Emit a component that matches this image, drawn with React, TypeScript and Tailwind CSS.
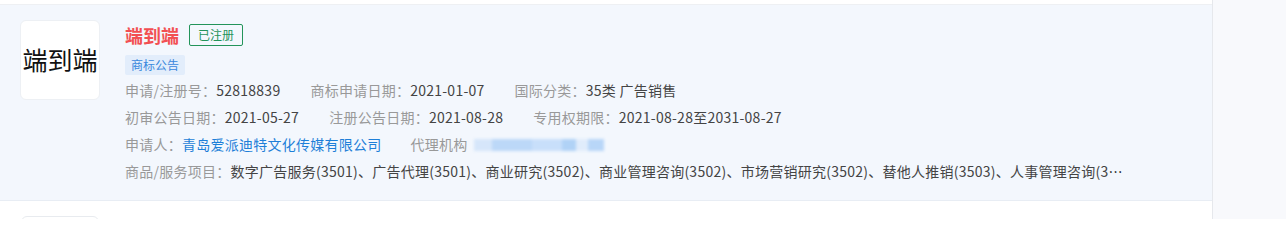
import React from "react";

const font = { fontFamily: '"Noto Sans CJK SC", "Noto Sans", sans-serif' };

function Field({ label, value, blue }: { label: string; value: React.ReactNode; blue?: boolean }) {
  return (
    <span className="whitespace-nowrap">
      <span className="text-[#999999]">{label}：</span>
      <span className={blue ? "text-[#1e7fd8]" : "text-[#444444]"}>{value}</span>
    </span>
  );
}

const goods =
  "数字广告服务(3501)、广告代理(3501)、商业研究(3502)、商业管理咨询(3502)、市场营销研究(3502)、替他人推销(3503)、人事管理咨询(3504)、商业信息代理(3505)、会计(3506)";

export default function App() {
  return (
    <div className="flex h-[219px] w-full overflow-hidden bg-[#f8f9fc]" style={font}>
      <div className="w-[1213px] shrink-0 border-r border-[#e6e8ec] bg-white">
        <div className="h-[5px] border-b border-[#eef0f3]" />
        {/* 商标卡片 */}
        <div className="flex h-[196px] items-start gap-[25px] border-b border-[#e8edf4] bg-[#f3f7fd] pl-[20px] pt-[15px]">
          <div className="flex h-[80px] w-[80px] shrink-0 items-center justify-center rounded-[6px] border border-[#edf0f4] bg-white text-[25px] text-[#111111]">
            端到端
          </div>
          <div className="mt-[4px] flex min-w-0 flex-col">
            <div className="flex h-[22px] items-center gap-[10px]">
              <span className="text-[18px] font-bold leading-[22px] text-[#f24f52]">端到端</span>
              <span className="flex h-[22px] items-center rounded-[2px] border border-[#23945a] px-[8px] text-[12px] text-[#23945a]">
                已注册
              </span>
            </div>
            <div className="mt-[9px] flex">
              <span className="flex h-[20px] items-center rounded-[2px] bg-[#e2edfb] px-[6px] text-[12px] text-[#3a88dd]">
                商标公告
              </span>
            </div>
            <div className="mt-[2px] flex flex-col text-[14px] leading-[27px] tracking-[0.25px]">
              <div className="flex gap-[30px]">
                <Field label="申请/注册号" value="52818839" />
                <Field label="商标申请日期" value="2021-01-07" />
                <Field label="国际分类" value="35类 广告销售" />
              </div>
              <div className="flex gap-[30px]">
                <Field label="初审公告日期" value="2021-05-27" />
                <Field label="注册公告日期" value="2021-08-28" />
                <Field label="专用权期限" value="2021-08-28至2031-08-27" />
              </div>
              <div className="flex items-center gap-[29px]">
                <Field label="申请人" value="青岛爱派迪特文化传媒有限公司" blue />
                <span className="flex items-center whitespace-nowrap">
                  <span className="text-[#999999]">代理机构</span>
                  <span className="ml-[6px] flex h-[14px] items-center blur-[1.5px]">
                    <span className="h-[12px] w-[18px] bg-[#d6e6fa]" />
                    <span className="h-[12px] w-[40px] bg-[#bcd8f8]" />
                    <span className="h-[12px] w-[30px] bg-[#c8dffa]" />
                    <span className="h-[12px] w-[14px] bg-[#b0d2f6]" />
                    <span className="h-[12px] w-[12px] bg-[#e0ecfb]" />
                    <span className="h-[12px] w-[16px] bg-[#b8d6f8]" />
                  </span>
                </span>
              </div>
              <div className="w-[1001px] truncate">
                <span className="text-[#999999]">商品/服务项目：</span>
                <span className="text-[#444444]">{goods}</span>
              </div>
            </div>
          </div>
        </div>
        {/* 下一条 */}
        <div className="flex pl-[21px] pt-[15px]">
          <div className="h-[80px] w-[78px] rounded-[6px] border border-[#e8ebef] bg-white" />
        </div>
      </div>
      <div className="flex-1" />
    </div>
  );
}
